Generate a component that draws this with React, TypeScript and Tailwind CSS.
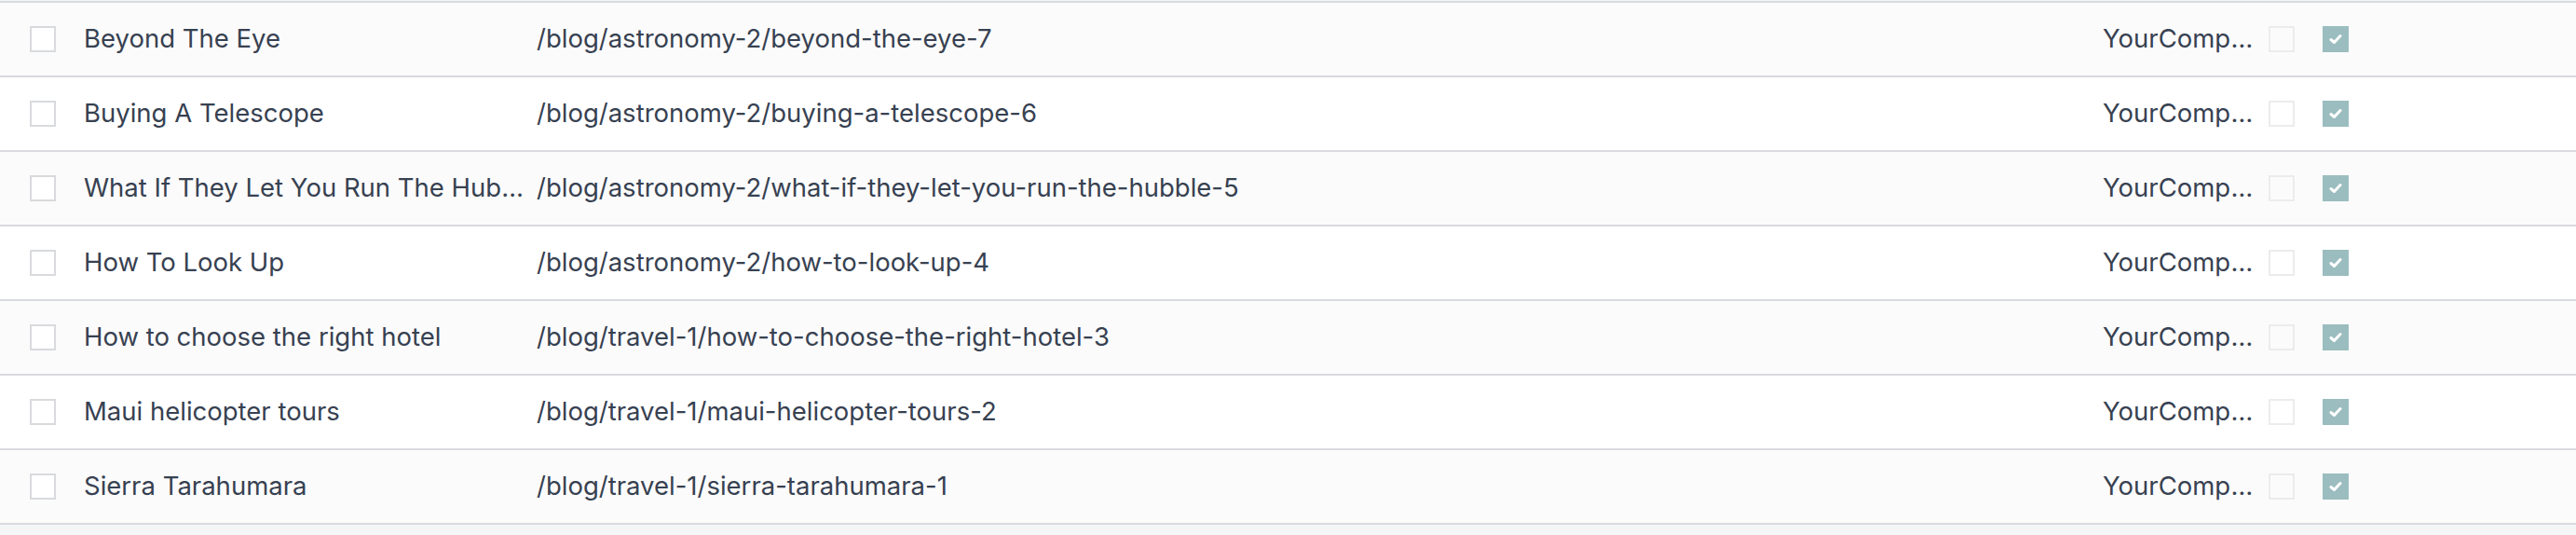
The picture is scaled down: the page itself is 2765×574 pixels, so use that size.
const posts = [
    { name: 'Beyond The Eye', url: '/blog/astronomy-2/beyond-the-eye-7' },
    { name: 'Buying A Telescope', url: '/blog/astronomy-2/buying-a-telescope-6' },
    { name: 'What If They Let You Run The Hubble', url: '/blog/astronomy-2/what-if-they-let-you-run-the-hubble-5' },
    { name: 'How To Look Up', url: '/blog/astronomy-2/how-to-look-up-4' },
    { name: 'How to choose the right hotel', url: '/blog/travel-1/how-to-choose-the-right-hotel-3' },
    { name: 'Maui helicopter tours', url: '/blog/travel-1/maui-helicopter-tours-2' },
    { name: 'Sierra Tarahumara', url: '/blog/travel-1/sierra-tarahumara-1' },
]

function CheckMark() {
    return (
        <svg width="14" height="12" viewBox="0 0 14 12" fill="none">
            <path d="M2 6.5 L5.5 9.5 L12 2.5" stroke="white" strokeWidth="3" strokeLinecap="round" strokeLinejoin="round" />
        </svg>
    )
}

function App() {
    return (
        <div className="w-full min-h-[574px] bg-[#f4f5f7] pt-px text-[27.5px] text-[#374151]" style={{ fontFamily: 'Inter, "Noto Sans", sans-serif' }}>
            <div className="border-t-2 border-[#d9dadf]">
                {posts.map((post, i) => (
                    <div
                        key={post.url}
                        className={`flex items-center h-[80px] border-b-2 border-[#d9dadf] ${i % 2 === 0 ? 'bg-[#fbfbfb]' : 'bg-white'}`}
                    >
                        <div className="w-[90px] shrink-0 pl-[32px]">
                            <div className="w-[28px] h-[28px] border-2 border-[#d8dadd] bg-white" />
                        </div>
                        <div className="w-[486px] shrink-0 pr-[6px] truncate">{post.name}</div>
                        <div className="flex-1 truncate">{post.url}</div>
                        <div className="w-[178px] shrink-0 pr-[8px] truncate">YourCompany</div>
                        <div className="w-[58px] shrink-0">
                            <div className="w-[28px] h-[28px] border-2 border-[#ececec]" />
                        </div>
                        <div className="w-[272px] shrink-0">
                            <div className="w-[28px] h-[28px] bg-[#9bbdbf] flex items-center justify-center">
                                <CheckMark />
                            </div>
                        </div>
                    </div>
                ))}
            </div>
        </div>
    )
}

export default App
